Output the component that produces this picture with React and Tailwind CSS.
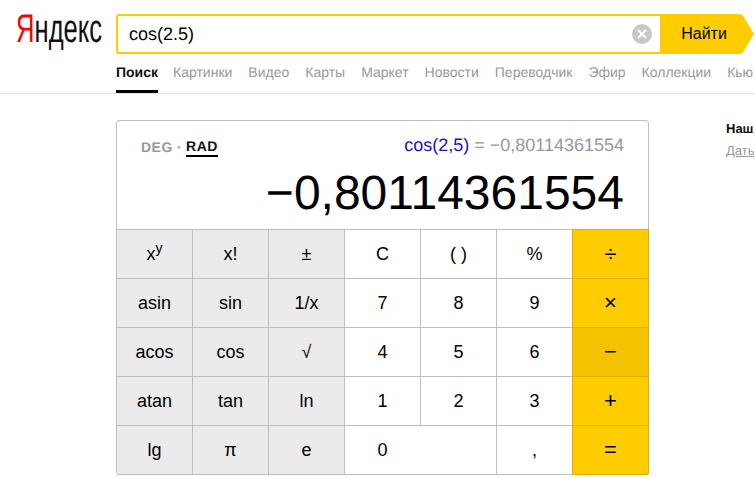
const tabs = ['Картинки', 'Видео', 'Карты', 'Маркет', 'Новости', 'Переводчик', 'Эфир', 'Коллекции', 'Кью'];

const keys = [
  { label: 'xy', kind: 'fn' }, { label: 'x!', kind: 'fn' }, { label: '±', kind: 'fn' }, { label: 'C' }, { label: '( )' }, { label: '%' }, { label: '÷', kind: 'op', first: true },
  { label: 'asin', kind: 'fn' }, { label: 'sin', kind: 'fn' }, { label: '1/x', kind: 'fn' }, { label: '7' }, { label: '8' }, { label: '9' }, { label: '×', kind: 'op' },
  { label: 'acos', kind: 'fn' }, { label: 'cos', kind: 'fn' }, { label: '√', kind: 'fn' }, { label: '4' }, { label: '5' }, { label: '6' }, { label: '−', kind: 'active' },
  { label: 'atan', kind: 'fn' }, { label: 'tan', kind: 'fn' }, { label: 'ln', kind: 'fn' }, { label: '1' }, { label: '2' }, { label: '3' }, { label: '+', kind: 'op' },
  { label: 'lg', kind: 'fn' }, { label: 'π', kind: 'fn' }, { label: 'e', kind: 'fn' }, { label: '0', kind: 'zero' }, { label: ',' }, { label: '=', kind: 'op', corner: true },
];

function Key({ label, kind, first, corner }) {
  const colours = {
    fn: 'bg-[#ebebeb]',
    op: 'bg-[#ffcc00] border-[#dcb000] border-l -ml-px text-[22px]',
    active: 'bg-[#f3c300] border-[#dcb000] border-l -ml-px text-[22px]',
    zero: 'bg-white col-span-2 pr-[76px]',
  };
  return (
    <button
      className={`flex items-center justify-center border-r border-b border-[#bfbfbf] text-lg text-black ${colours[kind] || 'bg-white'} ${first ? '-mt-px h-[50px] border-t' : 'h-[49px]'} ${corner ? 'rounded-br-[3px]' : ''}`}
    >
      {label === 'xy' ? (
        <span>x<sup className="text-sm">y</sup></span>
      ) : label}
    </button>
  );
}

export default function App() {
  return (
    <div className="w-[755px] h-[479px] overflow-hidden bg-white font-['Liberation_Sans',Arial,sans-serif] [text-rendering:geometricPrecision]">
      <header className="h-[94px] border-b border-[#e5e5e5]">
        <div className="flex pt-[14px]">
          <div className="w-[116px] shrink-0 pl-4">
            <div className="w-fit origin-left scale-x-[0.64] whitespace-nowrap text-[40px] leading-[30px] text-[#111]">
              <span className="text-[#f00]">Я</span>ндекс
            </div>
          </div>
          <div className="flex h-10 shrink-0">
            <div className="flex w-[544px] items-center rounded-l-[3px] border-2 border-r-0 border-[#ffcc00] pl-[11px] pr-[8px]">
              <span className="flex-1 text-lg text-black">cos(2.5)</span>
              <span className="flex h-5 w-5 items-center justify-center rounded-full bg-[#c8c8c8]">
                <svg width="10" height="10" viewBox="0 0 10 10">
                  <path d="M1 1 9 9M9 1 1 9" stroke="#fff" strokeWidth="2" />
                </svg>
              </span>
            </div>
            <button className="relative w-[82px] rounded-tr-[2px] rounded-br-[2px] bg-[#ffcc00] pl-[6px] text-base text-black">
              Найти
              <span className="absolute left-full top-0 h-10 w-3 bg-[#ffcc00] [clip-path:polygon(0_0,100%_50%,0_100%)]" />
            </button>
          </div>
        </div>
        <nav className="ml-[116px] mt-[7px] flex h-8 gap-4 whitespace-nowrap text-sm">
          <a className="-mr-px h-8 border-b-[3px] border-black pt-px font-bold text-[#111]">Поиск</a>
          {tabs.map((t) => (
            <a key={t} className="pt-px text-[#999]">{t}</a>
          ))}
        </nav>
      </header>

      <main className="ml-[116px] mt-[26px] flex">
        <section className="w-[533px] shrink-0 rounded-[3px] border border-[#bfbfbf]">
          <div className="h-[109px] border-b border-[#bfbfbf] px-6 pt-[14px]">
            <div className="flex items-start justify-between">
              <div className="mt-[2px] flex text-sm font-bold tracking-[0.5px] text-[#999]">
                <span>DEG</span>
                <span className="mx-1">·</span>
                <span className="h-[20px] border-b-2 border-black leading-[18px] text-[#111]">RAD</span>
              </div>
              <div className="text-lg leading-5 text-[#999]">
                <span className="text-[#2014b8]">cos(2,5)</span> = −0,80114361554
              </div>
            </div>
            <div className="mt-[9px] text-right text-[48px] leading-[56px] text-black">−0,80114361554</div>
          </div>
          <div className="-mb-px -mr-px grid grid-cols-[repeat(7,76px)]">
            {keys.map((k) => (
              <Key key={k.label} {...k} />
            ))}
          </div>
        </section>

        <aside className="ml-[77px] w-7 shrink-0 overflow-hidden whitespace-nowrap pt-px text-[13px]">
          <div className="font-bold leading-[15px] text-[#111]">Нашлось 8 млн результатов</div>
          <a className="mt-[7px] block leading-[15px] text-[#999] underline">Дать объявление</a>
        </aside>
      </main>
    </div>
  );
}
